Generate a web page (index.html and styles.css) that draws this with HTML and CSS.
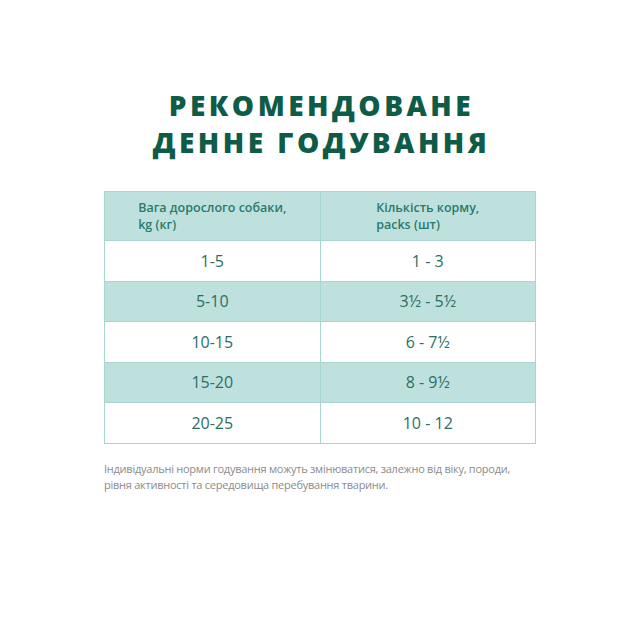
FILE: index.html
```html
<!DOCTYPE html>
<html lang="uk">
<head>
<meta charset="utf-8">
<link rel="stylesheet" href="styles.css">
</head>
<body>
<div class="page">
  <h1 class="title">РЕКОМЕНДОВАНЕ<br>ДЕННЕ ГОДУВАННЯ</h1>
  <table class="feed">
    <thead>
      <tr>
        <th><span class="hd">Вага дорослого собаки,<br>kg (кг)</span></th>
        <th><span class="hd">Кількість корму,<br>packs (шт)</span></th>
      </tr>
    </thead>
    <tbody>
      <tr><td>1-5</td><td>1 - 3</td></tr>
      <tr class="alt"><td>5-10</td><td>3½ - 5½</td></tr>
      <tr><td>10-15</td><td>6 - 7½</td></tr>
      <tr class="alt"><td>15-20</td><td>8 - 9½</td></tr>
      <tr><td>20-25</td><td>10 - 12</td></tr>
    </tbody>
  </table>
  <p class="note">Індивідуальні норми годування можуть змінюватися, залежно від віку, породи, рівня активності та середовища перебування тварини.</p>
</div>
</body>
</html>
```
FILE: styles.css
```css
html, body {
  margin: 0;
  padding: 0;
  background: #ffffff;
}
.page {
  width: 640px;
  height: 630px;
  display: flex;
  flex-direction: column;
  align-items: center;
  font-family: "Open Sans", "Noto Sans", sans-serif;
}
.title {
  margin: 87px 0 0;
  padding-left: 3px;
  font-size: 28px;
  line-height: 37px;
  font-weight: 800;
  letter-spacing: 3.5px;
  color: #0e5c48;
  text-align: center;
}
.feed {
  margin-top: 30px;
  width: 432px;
  border-collapse: collapse;
  table-layout: fixed;
  border: 1px solid #a9d6d0;
}
.feed th, .feed td {
  border: 1px solid #a9d6d0;
  text-align: center;
}
.feed th {
  background: #bfe1de;
  height: 48px;
  font-size: 12.5px;
  line-height: 17px;
  font-weight: 600;
  color: #2a7a6b;
  padding: 0;
}
.hd {
  display: inline-block;
  text-align: left;
}
.feed td {
  height: 39.5px;
  padding: 0;
  font-size: 16px;
  font-weight: 500;
  color: #2b6f62;
}
.feed tr.alt td {
  background: #bfe1de;
}
.note {
  width: 436px;
  margin: 17px 0 0 4px;
  font-size: 11px;
  letter-spacing: -0.25px;
  line-height: 16px;
  color: #8b8b8b;
}
```
